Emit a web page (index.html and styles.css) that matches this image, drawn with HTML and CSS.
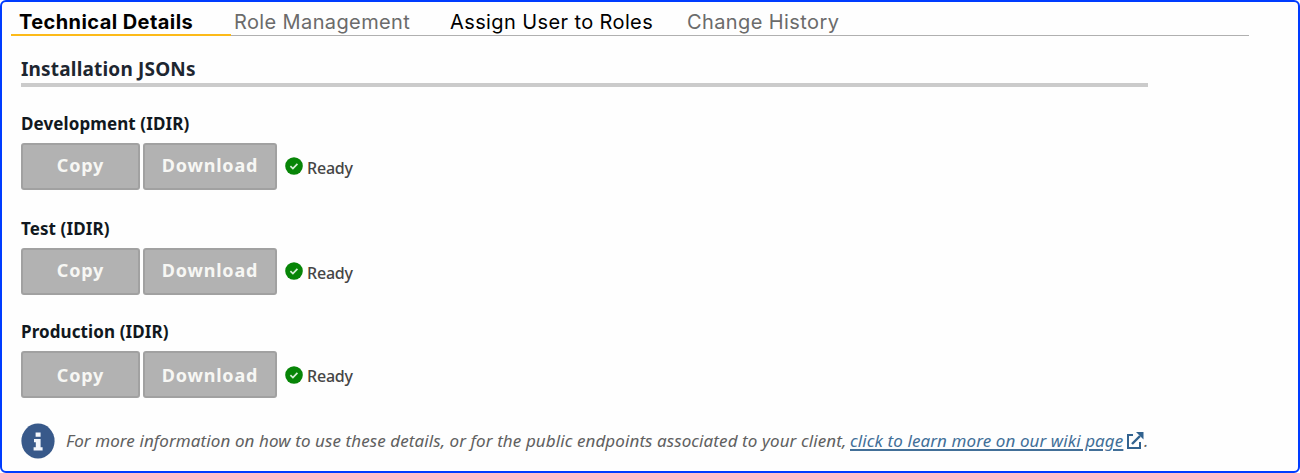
FILE: index.html
```html
<!DOCTYPE html>
<html lang="en">
<head>
<meta charset="utf-8">
<title>Technical Details</title>
<link rel="stylesheet" href="styles.css">
</head>
<body>
<svg class="defs" width="0" height="0" aria-hidden="true">
  <symbol id="check" viewBox="0 0 18 18"><circle cx="9" cy="9" r="8.8" fill="#078507"/><path d="M5.4 9.2l2.5 2.4 4.5-4.8" fill="none" stroke="#d5eed5" stroke-width="1.7"/></symbol>
</svg>
<main class="panel">
  <nav class="tabs">
    <a class="tab tab-active">Technical Details</a>
    <a class="tab tab-role">Role Management</a>
    <a class="tab tab-assign">Assign User to Roles</a>
    <a class="tab tab-history">Change History</a>
  </nav>
  <section class="content">
    <h1 class="title"><span>Installation JSONs</span></h1>
    <div class="env">
      <h2 class="env-name">Development (IDIR)</h2>
      <div class="actions">
        <button class="btn btn-copy">Copy</button><button class="btn btn-download">Download</button>
        <svg class="check"><use href="#check"/></svg><span class="ready">Ready</span>
      </div>
    </div>
    <div class="env">
      <h2 class="env-name">Test (IDIR)</h2>
      <div class="actions">
        <button class="btn btn-copy">Copy</button><button class="btn btn-download">Download</button>
        <svg class="check"><use href="#check"/></svg><span class="ready">Ready</span>
      </div>
    </div>
    <div class="env env-last">
      <h2 class="env-name">Production (IDIR)</h2>
      <div class="actions">
        <button class="btn btn-copy">Copy</button><button class="btn btn-download">Download</button>
        <svg class="check"><use href="#check"/></svg><span class="ready">Ready</span>
      </div>
    </div>
    <div class="info">
      <svg class="info-icon" viewBox="0 0 34 36"><ellipse cx="17" cy="18" rx="16.6" ry="17.5" fill="#38598a"/><path d="M14.6 9.5h5v4.2h-5zM13 16h6.6v8.2h2v3.3H12.6v-3.3h2.2v-5H13z" fill="#f3f6fb"/></svg>
      <p class="note"><span class="note-text">For more information on how to use these details, or for the public endpoints associated to your client,</span><a class="link">click to learn more on our wiki page</a><svg class="external" viewBox="0 0 18 18"><path d="M7 3H2v13h12v-6" fill="none" stroke="#31628f" stroke-width="2"/><path d="M6 12L14 4" stroke="#31628f" stroke-width="2.4"/><path d="M10 0H17.5v7.5z" fill="#31628f"/></svg><span class="dot">.</span></p>
    </div>
  </section>
</main>
</body>
</html>
```
FILE: styles.css
```css
* { box-sizing: border-box; }
body { margin: 0; background: #fff; }
.defs { display: block; }
.panel {
  width: 1300px;
  height: 473px;
  border: 2px solid #003cff;
  border-radius: 6px;
  background: #fefefe;
  overflow: hidden;
  font-family: "Noto Sans", sans-serif;
}
.tabs {
  display: flex;
  width: 1238px;
  height: 34px;
  margin-left: 9px;
  border-bottom: 1px solid #b0b0b0;
  font: 400 20px/24px Inter, sans-serif;
}
.tab { height: 34px; padding-top: 8px; color: #6b6b6b; white-space: nowrap; }
.tab-active {
  width: 220px;
  padding-left: 8px;
  border-bottom: 2px solid #fcba19;
  color: #000;
  font-weight: 700;
  letter-spacing: 0.42px;
}
.tab-role { width: 219px; padding-left: 3px; letter-spacing: 0.38px; }
.tab-assign { width: 237px; color: #000; letter-spacing: 0.39px; }
.tab-history { letter-spacing: 0.4px; }
.content { padding: 21px 0 0 19px; }
.title {
  width: 1127px;
  height: 30px;
  margin: 0 0 26px;
  border-bottom: 4px solid #cbcbcb;
  color: #1d2630;
  font-size: 19px;
  line-height: 24px;
  font-weight: 700;
  letter-spacing: 0.18px;
}
.env { height: 105px; }
.env + .env { height: 103px; }
.env-last.env { height: 102px; }
.env-name { margin: 0; height: 30px; color: #111820; font-size: 17px; line-height: 22px; font-weight: 700; letter-spacing: 0.1px; }
.actions { display: flex; align-items: center; height: 47px; }
.btn {
  height: 47px;
  padding: 0 0 3px;
  border: 2px solid #a1a1a1;
  border-radius: 3px;
  background: #b2b2b2;
  color: #f7f7f4;
  font: 700 18px/24px "Noto Sans", sans-serif;
  letter-spacing: 0.8px;
}
.btn-copy { width: 119px; margin-right: 3px; }
.btn-download { width: 134px; }
.check { width: 18px; height: 18px; margin: 0 4px 1px 8px; }
.env-last .check { margin-bottom: 0; }
.env-last .btn { padding-bottom: 0; }
.ready { padding-top: 2px; color: #454545; font-size: 16px; line-height: 22px; font-weight: 500; letter-spacing: -0.2px; }
.info { display: flex; align-items: center; height: 36px; }
.info-icon { width: 34px; height: 36px; margin-right: 11px; }
.note { display: flex; align-items: center; margin: 0; color: #606060; font-size: 17px; line-height: 24px; font-style: italic; white-space: nowrap; letter-spacing: 0.09px; }
.note-text { width: 784px; }
.link { width: 274px; color: #426f98; text-decoration: underline; text-decoration-thickness: 2px; text-underline-offset: 2px; }
.external { width: 18px; height: 18px; margin-left: 2px; }
```
